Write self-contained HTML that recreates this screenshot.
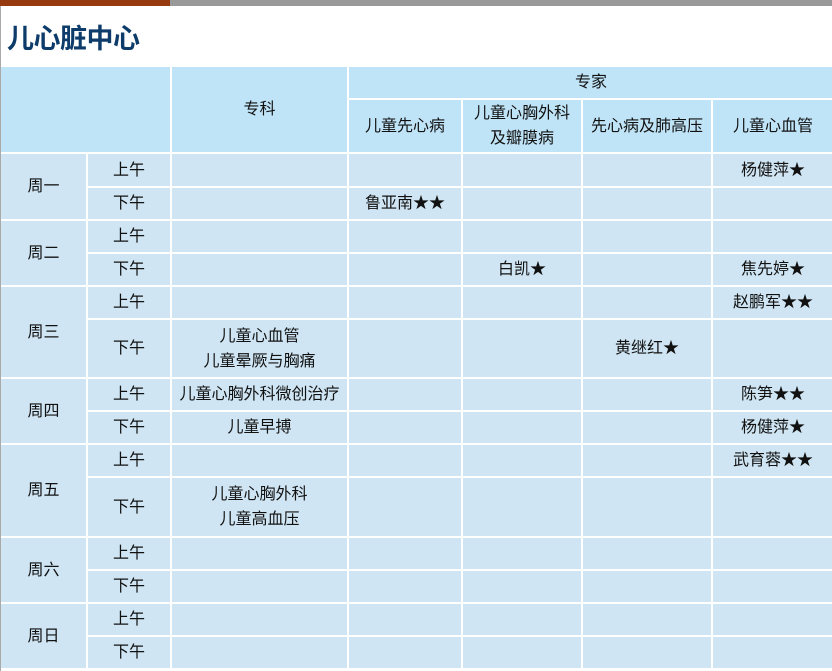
<!DOCTYPE html>
<html><head><meta charset="utf-8"><style>
html,body{margin:0;padding:0;background:#fff;width:832px;height:671px;overflow:hidden}
body{font-family:"Liberation Sans","Noto Sans CJK SC",sans-serif;position:relative}
.bar1{position:absolute;left:0;top:0;width:170px;height:6px;background:#973a0f}
.bar2{position:absolute;left:170px;top:0;width:662px;height:6px;background:#999}
.side{position:absolute;left:0;top:6px;width:1px;height:665px;background:#aaa}
h1{position:absolute;left:7px;top:17px;margin:0;font-size:27px;font-weight:bold;color:#0d3b6a;font-family:"Noto Sans CJK SC",sans-serif;letter-spacing:-0.5px}
table{position:absolute;left:-1px;top:65px;border-collapse:collapse;table-layout:fixed;width:834px}
td{border:2px solid #fff;text-align:center;font-size:16px;color:#111;padding:0;line-height:25px;background:#cfe5f3}
tr.h td{background:#c0e4f7}
</style></head><body>
<div class="bar1"></div><div class="bar2"></div>
<h1>儿心脏中心</h1>
<table>
<colgroup><col style="width:87px"><col style="width:84px"><col style="width:177px"><col style="width:114px"><col style="width:120px"><col style="width:130px"><col style="width:122px"></colgroup>
<tr class="h" style="height:33px"><td colspan="2" rowspan="2"></td><td rowspan="2">专科</td><td colspan="4">专家</td></tr>
<tr class="h" style="height:54px"><td>儿童先心病</td><td>儿童心胸外科<br>及瓣膜病</td><td>先心病及肺高压</td><td>儿童心血管</td></tr>
<tr style="height:34px"><td rowspan="2">周一</td><td>上午</td><td></td><td></td><td></td><td></td><td>杨健萍★</td></tr>
<tr style="height:33px"><td>下午</td><td></td><td>鲁亚南★★</td><td></td><td></td><td></td></tr>
<tr style="height:33px"><td rowspan="2">周二</td><td>上午</td><td></td><td></td><td></td><td></td><td></td></tr>
<tr style="height:33px"><td>下午</td><td></td><td></td><td>白凯★</td><td></td><td>焦先婷★</td></tr>
<tr style="height:33px"><td rowspan="2">周三</td><td>上午</td><td></td><td></td><td></td><td></td><td>赵鹏军★★</td></tr>
<tr style="height:59px"><td>下午</td><td>儿童心血管<br>儿童晕厥与胸痛</td><td></td><td></td><td>黄继红★</td><td></td></tr>
<tr style="height:33px"><td rowspan="2">周四</td><td>上午</td><td>儿童心胸外科微创治疗</td><td></td><td></td><td></td><td>陈笋★★</td></tr>
<tr style="height:33px"><td>下午</td><td>儿童早搏</td><td></td><td></td><td></td><td>杨健萍★</td></tr>
<tr style="height:33px"><td rowspan="2">周五</td><td>上午</td><td></td><td></td><td></td><td></td><td>武育蓉★★</td></tr>
<tr style="height:60px"><td>下午</td><td>儿童心胸外科<br>儿童高血压</td><td></td><td></td><td></td><td></td></tr>
<tr style="height:33px"><td rowspan="2">周六</td><td>上午</td><td></td><td></td><td></td><td></td><td></td></tr>
<tr style="height:33px"><td>下午</td><td></td><td></td><td></td><td></td><td></td></tr>
<tr style="height:33px"><td rowspan="2">周日</td><td>上午</td><td></td><td></td><td></td><td></td><td></td></tr>
<tr style="height:33px"><td>下午</td><td></td><td></td><td></td><td></td><td></td></tr>
</table>
<div class="side"></div>
</body></html>
